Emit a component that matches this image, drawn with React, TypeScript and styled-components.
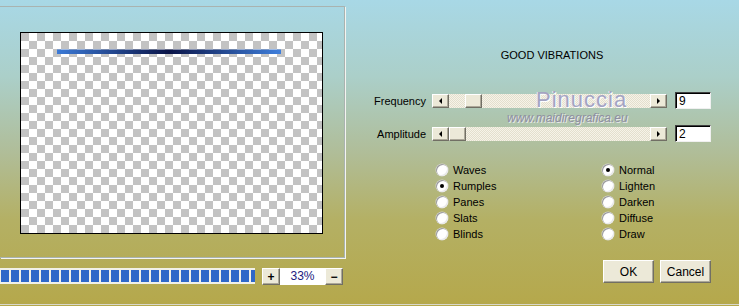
import React from 'react';
import styled, { createGlobalStyle } from 'styled-components';

const GlobalStyle = createGlobalStyle`
  html, body {
    margin: 0;
    padding: 0;
    background: #b5a94b;
  }
  body {
    font-family: "Liberation Sans", Arial, sans-serif;
    font-size: 11px;
    color: #000;
  }
`;

const Page = styled.div`
  width: 739px;
  height: 306px;
  overflow: hidden;
  display: flex;
  flex-direction: column;
  background: linear-gradient(180deg, #a8d8e6 0%, #abcfc9 25%, #b0bd98 50%, #b4b064 72%, #b5a84b 100%);
`;

const Main = styled.div`
  display: flex;
  height: 258px;
`;

const Frame = styled.div`
  box-sizing: border-box;
  flex-shrink: 0;
  margin-top: 6px;
  width: 345px;
  height: 252px;
  border: 1px solid #a9b3b0;
  border-left: none;
  box-shadow: 1px 1px 0 #f4f4f0;
  padding: 25px 0 0 20px;
`;

const Preview = styled.div`
  position: relative;
  box-sizing: border-box;
  width: 303px;
  height: 202px;
  border: 1px solid #000;
  background-color: #ffffff;
  background-image: repeating-conic-gradient(#ffffff 0 25%, #c3c3c3 0 50%);
  background-size: 16px 16px;
`;

const Stroke = styled.svg`
  position: absolute;
  left: 36px;
  top: 16px;
`;

const Side = styled.div`
  position: relative;
  flex: 1;
  min-width: 0;
  display: flex;
  flex-direction: column;
  padding-left: 20px;
`;

const Title = styled.div`
  margin-top: 48px;
  text-align: center;
  line-height: 14px;
`;

const Sliders = styled.div`
  display: flex;
  flex-direction: column;
  gap: 16px;
  margin-top: 30px;
`;

const SliderRow = styled.div`
  display: flex;
  align-items: center;
  height: 17px;
`;

const Label = styled.div`
  width: 61px;
  text-align: right;
  margin-right: 6px;
`;

const Track = styled.div`
  box-sizing: border-box;
  display: flex;
  width: 235px;
  height: 14px;
  background: repeating-conic-gradient(#f6f3e8 0 25%, #e3dfcd 0 50%) 0 0 / 2px 2px;
`;

const ScrollButton = styled.div`
  box-sizing: border-box;
  width: 17px;
  height: 14px;
  background: #ece9d8;
  border-top: 1px solid #ffffff;
  border-left: 1px solid #ffffff;
  border-right: 1px solid #716f64;
  border-bottom: 1px solid #716f64;
  box-shadow: inset -1px -1px 0 #aca899;
  display: flex;
  align-items: center;
  justify-content: center;
`;

const Thumb = styled(ScrollButton)<{ $offset: number }>`
  margin-left: ${p => p.$offset}px;
  width: 17px;
`;

const Spacer = styled.div`
  flex: 1;
`;

const Arrow = styled.span<{ $dir: 'left' | 'right' }>`
  width: 0;
  height: 0;
  border-top: 3px solid transparent;
  border-bottom: 3px solid transparent;
  ${p => (p.$dir === 'left' ? 'border-right: 3px solid #000;' : 'border-left: 3px solid #000;')}
`;

const NumField = styled.div`
  box-sizing: border-box;
  margin-left: 8px;
  width: 36px;
  height: 17px;
  background: #fff;
  border-top: 1px solid #404040;
  border-left: 1px solid #404040;
  border-right: 1px solid #f0f0f0;
  border-bottom: 1px solid #f0f0f0;
  box-shadow: inset 1px 1px 0 #000;
  padding: 1px 0 0 3px;
  font-size: 12px;
  line-height: 14px;
`;

const Watermark = styled.div`
  position: absolute;
  left: 191px;
  top: 87px;
  font-size: 22px;
  letter-spacing: 1px;
  color: #a4a4c2;
  text-shadow: 1px 1px 0 #ffffff, -1px 0 0 #e8e8f0;
  pointer-events: none;
`;

const WatermarkUrl = styled.div`
  position: absolute;
  left: 162px;
  top: 111px;
  font-size: 12px;
  font-style: italic;
  color: #8e8ea0;
  text-shadow: 1px 1px 0 #e8e8e8;
  pointer-events: none;
`;

const Options = styled.div`
  display: flex;
  margin-top: 20px;
  padding-left: 71px;
`;

const RadioColumn = styled.div`
  display: flex;
  flex-direction: column;
  width: 166px;
  &:last-child {
    width: auto;
  }
`;

const RadioRow = styled.div`
  display: flex;
  align-items: center;
  height: 16px;
`;

const RadioDot = styled.span<{ $checked: boolean }>`
  box-sizing: border-box;
  width: 12px;
  height: 12px;
  border-radius: 50%;
  margin-right: 5px;
  background: #ffffff;
  box-shadow: inset 1px 1px 0 #9a9a9a, inset -1px -1px 0 #e8e8e8, 0 0 0 0.5px #d8d8d0;
  display: flex;
  align-items: center;
  justify-content: center;
  &::after {
    content: '';
    width: 4px;
    height: 4px;
    border-radius: 50%;
    background: ${p => (p.$checked ? '#000' : 'transparent')};
  }
`;

const Footer = styled.div`
  display: flex;
  align-items: flex-start;
  height: 46px;
  border-bottom: 1px solid #d8d8cc;
`;

const Progress = styled.div`
  box-sizing: border-box;
  flex-shrink: 0;
  margin-top: 10px;
  width: 255px;
  height: 16px;
  background: #f0f0e8;
  padding: 2px 2px 2px 1px;
  display: flex;
  gap: 2px;
  overflow: hidden;
`;

const Block = styled.div`
  flex: 0 0 8px;
  background: #2e67c8;
`;

const ZoomGroup = styled.div`
  display: flex;
  margin-top: 10px;
  margin-left: 7px;
`;

const SmallButton = styled.div`
  box-sizing: border-box;
  width: 18px;
  height: 17px;
  background: #ece9d8;
  border-top: 1px solid #ffffff;
  border-left: 1px solid #ffffff;
  border-right: 1px solid #716f64;
  border-bottom: 1px solid #716f64;
  box-shadow: inset -1px -1px 0 #aca899;
  display: flex;
  align-items: center;
  justify-content: center;
  font-weight: bold;
  font-size: 12px;
  line-height: 1;
`;

const ZoomValue = styled.div`
  width: 45px;
  height: 17px;
  background: #ffffff;
  color: #1a1a80;
  text-align: center;
  font-size: 12px;
  line-height: 17px;
`;

const Actions = styled.div`
  display: flex;
  gap: 6px;
  margin: 2px 28px 0 auto;
`;

const PushButton = styled.button`
  box-sizing: border-box;
  width: 51px;
  height: 23px;
  padding: 0;
  background: #ece9d8;
  border: none;
  border-top: 1px solid #ffffff;
  border-left: 1px solid #ffffff;
  border-right: 1px solid #716f64;
  border-bottom: 1px solid #716f64;
  box-shadow: inset -1px -1px 0 #aca899;
  font-family: "Liberation Sans", Arial, sans-serif;
  font-size: 12px;
  color: #000;
`;

const sliders = [
  { label: 'Frequency', value: '9', offset: 16 },
  { label: 'Amplitude', value: '2', offset: 0 },
];

const modes = ['Waves', 'Rumples', 'Panes', 'Slats', 'Blinds'];
const blends = ['Normal', 'Lighten', 'Darken', 'Diffuse', 'Draw'];

const App: React.FC = () => {
  return (
    <>
      <GlobalStyle />
      <Page>
        <Main>
          <Frame>
            <Preview>
              <Stroke width="224" height="6" viewBox="0 0 224 6">
                <defs>
                  <linearGradient id="stroke" x1="0" x2="1" y1="0" y2="0">
                    <stop offset="0" stopColor="#3c7ad6" />
                    <stop offset="0.5" stopColor="#0a1448" />
                    <stop offset="1" stopColor="#3f7fdc" />
                  </linearGradient>
                </defs>
                <rect x="0" y="0.5" width="224" height="4.5" fill="url(#stroke)" />
              </Stroke>
            </Preview>
          </Frame>
          <Side>
            <Title>GOOD VIBRATIONS</Title>
            <Sliders>
              {sliders.map(s => (
                <SliderRow key={s.label}>
                  <Label>{s.label}</Label>
                  <Track>
                    <ScrollButton>
                      <Arrow $dir="left" />
                    </ScrollButton>
                    <Thumb $offset={s.offset} />
                    <Spacer />
                    <ScrollButton>
                      <Arrow $dir="right" />
                    </ScrollButton>
                  </Track>
                  <NumField>{s.value}</NumField>
                </SliderRow>
              ))}
            </Sliders>
            <Watermark>Pinuccia</Watermark>
            <WatermarkUrl>www.maidiregrafica.eu</WatermarkUrl>
            <Options>
              <RadioColumn>
                {modes.map(m => (
                  <RadioRow key={m}>
                    <RadioDot $checked={m === 'Rumples'} />
                    {m}
                  </RadioRow>
                ))}
              </RadioColumn>
              <RadioColumn>
                {blends.map(b => (
                  <RadioRow key={b}>
                    <RadioDot $checked={b === 'Normal'} />
                    {b}
                  </RadioRow>
                ))}
              </RadioColumn>
            </Options>
          </Side>
        </Main>
        <Footer>
          <Progress>
            {Array.from({ length: 26 }).map((_, i) => (
              <Block key={i} />
            ))}
          </Progress>
          <ZoomGroup>
            <SmallButton>+</SmallButton>
            <ZoomValue>33%</ZoomValue>
            <SmallButton>−</SmallButton>
          </ZoomGroup>
          <Actions>
            <PushButton>OK</PushButton>
            <PushButton>Cancel</PushButton>
          </Actions>
        </Footer>
      </Page>
    </>
  );
};

export default App;
